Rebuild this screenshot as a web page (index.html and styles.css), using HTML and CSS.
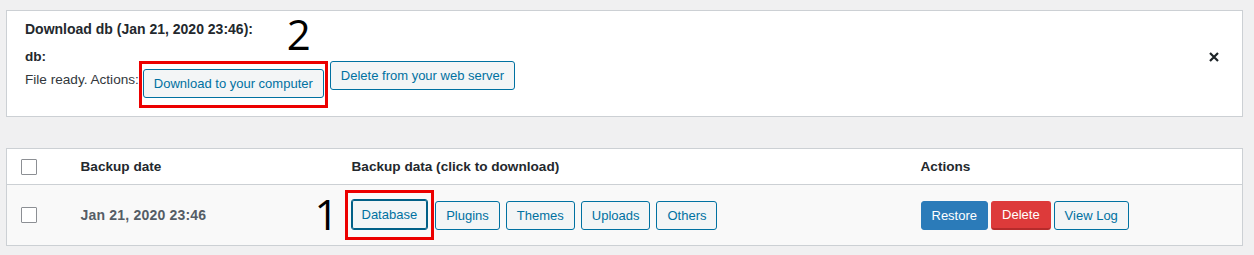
FILE: index.html
```html
<!DOCTYPE html>
<html lang="en">
<head>
    <meta charset="UTF-8">
    <meta name="viewport" content="width=device-width, initial-scale=1.0">
    <title>Existing Backups</title>
    <link rel="stylesheet" href="styles.css">
</head>
<body>
    <div class="notice">
        <p class="notice-title">Download db (Jan 21, 2020 23:46):</p>
        <p class="file-name">db:</p>
        <div class="file-actions">
            <span class="file-status">File ready. Actions:</span>
            <span class="highlight highlight-download">
                <span class="marker marker-2">2</span>
                <a href="#" class="button">Download to your computer</a>
            </span>
            <a href="#" class="button">Delete from your web server</a>
        </div>
        <button class="notice-dismiss" type="button" aria-label="Dismiss">
            <svg width="10" height="10" viewBox="0 0 10 10">
                <path d="M1 1 L9 9 M9 1 L1 9" stroke="#1d2327" stroke-width="2.2" fill="none"/>
            </svg>
        </button>
    </div>

    <table class="backups">
        <colgroup>
            <col class="col-check">
            <col class="col-date">
            <col class="col-data">
            <col>
        </colgroup>
        <thead>
            <tr>
                <th class="check"><span class="checkbox"></span></th>
                <th>Backup date</th>
                <th>Backup data (click to download)</th>
                <th>Actions</th>
            </tr>
        </thead>
        <tbody>
            <tr>
                <td class="check"><span class="checkbox"></span></td>
                <td class="backup-date">Jan 21, 2020 23:46</td>
                <td>
                    <div class="button-row">
                        <span class="highlight highlight-database">
                            <span class="marker marker-1">1</span>
                            <a href="#" class="button button-focus">Database</a>
                        </span>
                        <a href="#" class="button">Plugins</a>
                        <a href="#" class="button">Themes</a>
                        <a href="#" class="button">Uploads</a>
                        <a href="#" class="button">Others</a>
                    </div>
                </td>
                <td>
                    <div class="button-row actions">
                        <a href="#" class="button button-restore">Restore</a>
                        <a href="#" class="button button-delete">Delete</a>
                        <a href="#" class="button">View Log</a>
                    </div>
                </td>
            </tr>
        </tbody>
    </table>
</body>
</html>
```

FILE: styles.css
```css
body {
    font-family: "Liberation Sans", Arial, sans-serif;
    font-size: 13.6px;
    line-height: 18px;
    color: #32373c;
    margin: 0;
    padding: 10px 11px 0 6px;
    background-color: #f0f0f1;
}

p {
    margin: 0;
}

/* download notice */

.notice {
    position: relative;
    background-color: #fff;
    border: 1px solid #ccd0d4;
    padding: 9px 18px 8px 18px;
}

.notice-title {
    font-size: 14px;
    font-weight: bold;
    color: #23282d;
    margin-bottom: 10px;
}

.file-name {
    font-weight: bold;
    color: #23282d;
}

.file-actions {
    display: flex;
    align-items: flex-start;
    margin-top: -5px;
}

.file-status {
    margin-top: 10px;
}

.notice-dismiss {
    position: absolute;
    top: 36px;
    right: 18px;
    width: 20px;
    height: 20px;
    padding: 5px;
    border: none;
    background: none;
    cursor: pointer;
}

.notice-dismiss svg {
    display: block;
}

/* buttons */

.button {
    display: inline-block;
    box-sizing: border-box;
    height: 29px;
    line-height: 27px;
    padding: 0 10px;
    font-size: 13px;
    color: #0071a1;
    background-color: #f3f5f6;
    border: 1px solid #0071a1;
    border-radius: 3px;
    text-decoration: none;
    white-space: nowrap;
}

.button-focus {
    height: 31px;
    line-height: 29px;
    border-color: #016087;
    box-shadow: inset 0 0 0 1px #016087;
}

.button-restore {
    color: #fff;
    background-color: #2b7bb9;
    border-color: #2b7bb9;
}

.button-delete {
    color: #fff;
    background-color: #dd3a3a;
    border-color: #dd3a3a;
    border-bottom-color: #b52b2b;
    border-bottom-width: 2px;
    line-height: 26px;
}

/* red annotation boxes */

.highlight {
    position: relative;
    display: flex;
    border: 3px solid #ec0000;
    background-color: #fff;
}

.highlight-download {
    padding: 5px 1px 7px 1px;
    margin-right: 2px;
}

.highlight-database {
    padding: 6px 3px 7px 3px;
    margin-left: -7px;
    margin-right: 1px;
    background-color: #fafafa;
}

.button-row .highlight .button {
    margin-right: 0;
}

.marker {
    position: absolute;
    font-family: "Open Sans", sans-serif;
    font-size: 42px;
    line-height: 42px;
    color: #000;
}

.marker-2 {
    top: -51px;
    right: 14px;
}

.marker-1 {
    top: 0;
    left: -33px;
}

/* backups table */

.backups {
    width: 100%;
    margin-top: 31px;
    border-collapse: collapse;
    table-layout: fixed;
    background-color: #fff;
    border: 1px solid #ccd0d4;
}

.col-check {
    width: 64px;
}

.col-date {
    width: 271px;
}

.col-data {
    width: 569px;
}

.backups th {
    text-align: left;
    font-size: 13.6px;
    font-weight: bold;
    color: #23282d;
    height: 35px;
    padding: 0 10px;
    border-bottom: 1px solid #ccd0d4;
}

.backups td {
    background-color: #f9f9f9;
    padding: 5px 10px;
    height: 50px;
}

.backups .check {
    padding-left: 14px;
}

.checkbox {
    display: block;
    width: 14px;
    height: 14px;
    background-color: #fff;
    border: 1px solid #8c8f94;
    border-radius: 1px;
}

.backup-date {
    font-size: 14px;
    letter-spacing: 0.2px;
    font-weight: bold;
    color: #555d66;
}

.button-row {
    display: flex;
    align-items: center;
}

.button-row .button {
    margin-right: 6px;
}

.actions .button {
    margin-right: 3px;
}
```
